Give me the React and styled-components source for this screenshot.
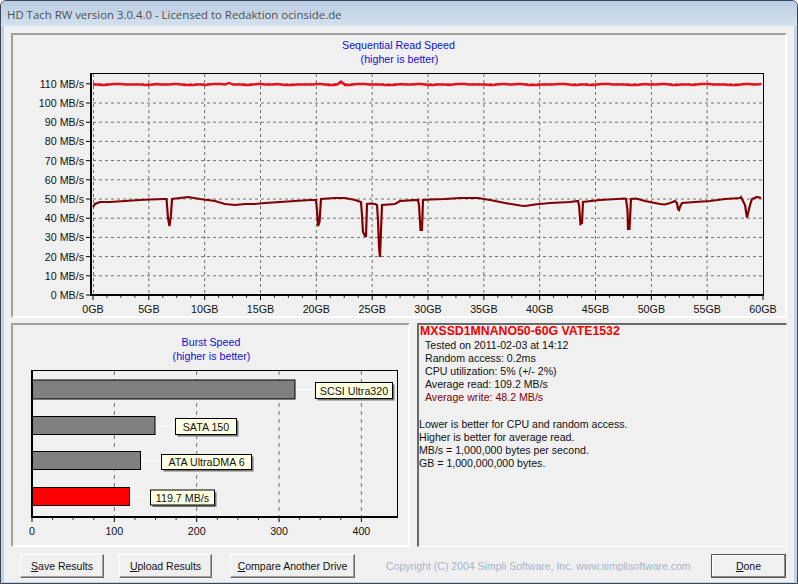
import React from 'react';
import styled, { createGlobalStyle } from 'styled-components';

const GlobalStyle = createGlobalStyle`
  html, body {
    margin: 0;
    padding: 0;
    background: #fff;
  }
`;

const Win = styled.div`
  box-sizing: border-box;
  width: 798px;
  height: 584px;
  display: flex;
  flex-direction: column;
  overflow: hidden;
  border: 1px solid #3a4658;
  border-radius: 6px 6px 0 0;
  background: #c3d3e4;
  font-family: "Liberation Sans", Arial, sans-serif;
`;

const TitleBar = styled.div`
  height: 25px;
  flex: none;
  padding: 2px 0 0 6px;
  box-sizing: border-box;
  display: flex;
  align-items: center;
  background: linear-gradient(#b9cde0, #d4e1ee);
  color: #4a4f55;
  font-family: "Open Sans", sans-serif;
  font-size: 11.4px;
`;

const Client = styled.div`
  flex: 1;
  margin: 0 3px 2px;
  padding: 7px 7px 0 7px;
  background: #f0f0f0;
  display: flex;
  flex-direction: column;
`;

const Panel = styled.div`
  box-sizing: border-box;
  border: 2px solid;
  border-color: #a0a0a0 #fff #fff #a0a0a0;
  background: #f0f0f0;
`;

const SpeedPanel = styled(Panel)`
  height: 285px;
  flex: none;
`;

const LowerRow = styled.div`
  display: flex;
  gap: 7px;
  margin-top: 5px;
  height: 224px;
  flex: none;
`;

const BurstPanel = styled(Panel)`
  width: 399px;
  flex: none;
`;

const InfoPanel = styled.div`
  flex: 1;
  box-sizing: border-box;
  border: 1px solid;
  border-color: #6a6a6a #fff #fff #6a6a6a;
  border-width: 2px 1px 1px 2px;
  padding: 0;
  font-size: 10.6px;
  line-height: 13px;
  color: #111;
`;

const DriveName = styled.div`
  font-weight: bold;
  font-size: 12.3px;
  padding-left: 1px;
  color: #f00000;
  height: 14px;
`;

const InfoList = styled.div`
  padding-left: 6px;
  margin-bottom: 14px;
`;

const InfoLine = styled.div`
  color: ${p => (p.$write ? '#800000' : 'inherit')};
`;

const ChartSvg = styled.svg`
  display: block;
  font-family: "Liberation Sans", Arial, sans-serif;
  font-size: 10.7px;
`;

const ButtonRow = styled.div`
  display: flex;
  align-items: center;
  height: 32px;
  margin-top: 3px;
  padding-left: 9px;
`;

const Btn = styled.button`
  box-sizing: border-box;
  width: ${p => p.$w}px;
  height: 24px;
  margin-right: ${p => p.$gap || 0}px;
  padding: 0;
  white-space: nowrap;
  background: #f0f0f0;
  border: 1px solid;
  border-color: #fff #696969 #696969 #fff;
  box-shadow: inset -1px -1px 0 #a0a0a0;
  font-family: "Liberation Sans", Arial, sans-serif;
  font-size: 10.5px;
  color: #111;
  u {
    text-decoration: underline;
  }
`;

const DoneBtn = styled(Btn)`
  border: 1px solid #555;
  box-shadow: inset -1px -1px 0 #8a8a8a, inset 1px 1px 0 #fff;
  margin-left: 20px;
`;

const Copy = styled.div`
  margin-left: 31px;
  width: 305px;
  color: #a4b4c8;
  font-size: 10.5px;
  white-space: nowrap;
`;

// offset of the svg drawings from the page, kept so points can be read off the screenshot
const SPEED_X = 13;
const SPEED_Y = 35;
const BURST_X = 13;
const BURST_Y = 325;

const writePts = [
  [93,207],[95,204],[100,202],[110,202],[125,201],[140,200],[150,199.5],[165,199],[166.5,199],[167,205],[168,218],[169.5,226],[171,215],[172,199],
  [180,198],[188,197],[200,199],[215,201],[225,204],[235,205],[245,204],[255,204],[265,203],[280,202],[295,201],[310,200],[316,200],[317,210],[318,226],[319.5,222],[321,199],
  [335,198],[345,198],[355,200],[361,202],[362,215],[363,232],[365,236],[366,236],[367,204],[370,203.5],[375,204],[377,205],[378,220],[379,247],[380,257],[381,230],[382,205],
  [395,204],[400,201],[418,200],[419,205],[420.5,230],[422,230],[423,200],[430,199.5],[445,199],[460,198],[478,198],[490,200],[505,203],[520,205.5],[525,206],[535,204.5],
  [550,203],[570,202],[578,201],[579,205],[580.5,224],[582,223],[583,202],[600,200],[625,198.5],[626,199],[627.5,210],[628,229],[629.5,229],[631,199],[636,198.5],
  [645,201],[655,203],[660,204],[665,204.5],[670,203],[675,201],[677,203],[678,209],[679,210],[680,207],[682,203],[695,202],[710,201],[725,199],[740,198],[741,197],
  [745,205],[747,217.5],[750,205],[752,199],[757,197],[761,198],
];

const readPts = (() => {
  const out = [];
  for (let x = 93; x <= 762; x += 4) {
    let y = Math.round((84.5 + Math.sin(x * 1.7) * 0.35 + Math.sin(x * 0.31) * 0.3) * 2) / 2;
    if (x >= 228 && x <= 231) y = 83;
    if (x >= 338 && x <= 341) y = 81.5;
    out.push([x, y]);
  }
  return out;
})();

const gbLabels = Array.from({ length: 13 }, (_, i) => i * 5);
const mbLabels = Array.from({ length: 12 }, (_, i) => i * 10);

const gbX = gb => 93 + gb * 11.167;
const mbY = mb => 295 - mb * 1.92;

const toPoints = pts => pts.map(([x, y]) => `${x},${y}`).join(' ');

const SpeedChart = () => (
  <ChartSvg width={770} height={281}>
    <g transform={`translate(${-SPEED_X} ${-SPEED_Y})`}>
      <text x={398.5} y={49} textAnchor="middle" fill="#1010d0">Sequential Read Speed</text>
      <text x={399.5} y={63} textAnchor="middle" fill="#1010d0">(higher is better)</text>
      {gbLabels.map(gb => (
        <g key={gb}>
          {gb > 0 && gb < 60 && (
            <line x1={gbX(gb)} x2={gbX(gb)} y1={74} y2={294} stroke="#707070" strokeDasharray="3 3" />
          )}
          <line x1={gbX(gb)} x2={gbX(gb)} y1={295} y2={300} stroke="#000" />
          <text x={gbX(gb)} y={313} textAnchor="middle" fill="#111">{gb}GB</text>
        </g>
      ))}
      {Array.from({ length: 49 }, (_, i) => i).filter(i => i % 4).map(i => (
        <line key={i} x1={gbX(i * 1.25)} x2={gbX(i * 1.25)} y1={295} y2={298} stroke="#333" />
      ))}
      {mbLabels.map(mb => (
        <g key={mb}>
          {mb > 0 && (
            <line x1={93} x2={763} y1={mbY(mb)} y2={mbY(mb)} stroke="#707070" strokeDasharray="3 3" />
          )}
          <line x1={86} x2={91} y1={mbY(mb)} y2={mbY(mb)} stroke="#000" />
          <text x={84} y={mbY(mb) + 4} textAnchor="end" fill="#111">{mb} MB/s</text>
        </g>
      ))}
      <line x1={93.5} x2={93.5} y1={74} y2={294} stroke="#707070" strokeDasharray="3 3" />
      <polyline points={toPoints(readPts)} fill="none" stroke="#e8101c" strokeWidth={2.4} />
      <polyline points={toPoints(writePts)} fill="none" stroke="#800000" strokeWidth={2.2} />
      <line x1={91} x2={763.5} y1={73.5} y2={73.5} stroke="#000" />
      <line x1={763.5} x2={763.5} y1={73} y2={296} stroke="#000" />
      <line x1={91} x2={91} y1={73} y2={296} stroke="#000" strokeWidth={2} />
      <line x1={90} x2={764} y1={295} y2={295} stroke="#000" strokeWidth={2} />
    </g>
  </ChartSvg>
);

const bars = [
  { top: 380, h: 19, right: 295, color: '#808080', label: 'SCSI Ultra320', lx: 316, lw: 77, ly: 383, lh: 16 },
  { top: 416.5, h: 18, right: 155, color: '#808080', label: 'SATA 150', lx: 176, lw: 61, ly: 419, lh: 16 },
  { top: 451.5, h: 18, right: 140.5, color: '#808080', label: 'ATA UltraDMA 6', lx: 162, lw: 90, ly: 455, lh: 15 },
  { top: 487.5, h: 18, right: 129.5, color: '#ff0000', label: '119.7 MB/s', lx: 151, lw: 64, ly: 490.5, lh: 15 },
];

const burstTicks = [0, 100, 200, 300, 400];
const burstX = v => 32 + v * 0.8235;

const BurstChart = () => (
  <ChartSvg width={395} height={220}>
    <g transform={`translate(${-BURST_X} ${-BURST_Y})`}>
      <text x={211} y={346} textAnchor="middle" fill="#1010d0">Burst Speed</text>
      <text x={211.5} y={360} textAnchor="middle" fill="#1010d0">(higher is better)</text>
      {burstTicks.map(v => (
        <g key={v}>
          {v > 0 && <line x1={burstX(v)} x2={burstX(v)} y1={371} y2={516} stroke="#707070" strokeDasharray="4 4" />}
          <line x1={burstX(v)} x2={burstX(v)} y1={517} y2={522} stroke="#000" />
          <text x={burstX(v)} y={535} textAnchor="middle" fill="#111">{v}</text>
        </g>
      ))}
      {Array.from({ length: 17 }, (_, i) => i * 25).filter(v => v % 100).map(v => (
        <line key={v} x1={burstX(v)} x2={burstX(v)} y1={517} y2={520} stroke="#333" />
      ))}
      {bars.map(b => (
        <g key={b.label}>
          <line x1={b.right} x2={b.lx} y1={b.top + 9.5} y2={b.top + 9.5} stroke="#fff" />
          <rect x={32} y={b.top} width={b.right - 32} height={b.h} fill={b.color} stroke="#000" />
          <rect x={b.lx + 1.5} y={b.ly + 1.5} width={b.lw} height={b.lh} fill="#777" />
          <rect x={b.lx - 0.5} y={b.ly - 0.5} width={b.lw} height={b.lh} fill="#ffffe1" stroke="#000" />
          <text x={b.lx + b.lw / 2 - 0.5} y={b.ly + b.lh / 2 + 3.5} textAnchor="middle" fill="#111">{b.label}</text>
        </g>
      ))}
      <line x1={31} x2={397.5} y1={370.5} y2={370.5} stroke="#000" />
      <line x1={397.5} x2={397.5} y1={370} y2={518} stroke="#000" />
      <line x1={32} x2={32} y1={370} y2={518} stroke="#000" strokeWidth={2} />
      <line x1={31} x2={398} y1={517} y2={517} stroke="#000" strokeWidth={2} />
    </g>
  </ChartSvg>
);

export default function App() {
  return (
    <>
      <GlobalStyle />
      <Win>
        <TitleBar>HD Tach RW version 3.0.4.0 - Licensed to Redaktion ocinside.de</TitleBar>
        <Client>
          <SpeedPanel>
            <SpeedChart />
          </SpeedPanel>
          <LowerRow>
            <BurstPanel>
              <BurstChart />
            </BurstPanel>
            <InfoPanel>
              <DriveName>MXSSD1MNANO50-60G VATE1532</DriveName>
              <InfoList>
                <InfoLine>Tested on 2011-02-03 at 14:12</InfoLine>
                <InfoLine>Random access: 0.2ms</InfoLine>
                <InfoLine>CPU utilization: 5% (+/- 2%)</InfoLine>
                <InfoLine>Average read: 109.2 MB/s</InfoLine>
                <InfoLine $write>Average write: 48.2 MB/s</InfoLine>
              </InfoList>
              <InfoLine>Lower is better for CPU and random access.</InfoLine>
              <InfoLine>Higher is better for average read.</InfoLine>
              <InfoLine>MB/s = 1,000,000 bytes per second.</InfoLine>
              <InfoLine>GB = 1,000,000,000 bytes.</InfoLine>
            </InfoPanel>
          </LowerRow>
          <ButtonRow>
            <Btn $w={84} $gap={15}><u>S</u>ave Results</Btn>
            <Btn $w={93} $gap={18}><u>U</u>pload Results</Btn>
            <Btn $w={125}><u>C</u>ompare Another Drive</Btn>
            <Copy>Copyright (C) 2004 Simpli Software, Inc. www.simplisoftware.com</Copy>
            <DoneBtn $w={75}><u>D</u>one</DoneBtn>
          </ButtonRow>
        </Client>
      </Win>
    </>
  );
}
